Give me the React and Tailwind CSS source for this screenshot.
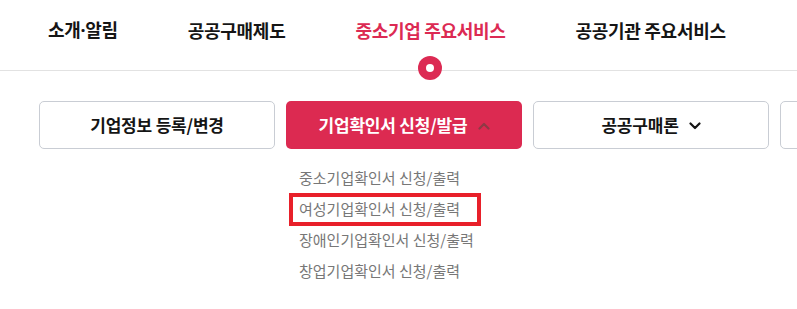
import React from 'react';

const navItems = ['소개·알림', '공공구매제도', '중소기업 주요서비스', '공공기관 주요서비스'];

const subItems = [
    '중소기업확인서 신청/출력',
    '여성기업확인서 신청/출력',
    '장애인기업확인서 신청/출력',
    '창업기업확인서 신청/출력',
];

const Chevron = ({ up, className }) => (
    <svg width="12" height="8" viewBox="0 0 12 8" className={className} fill="none">
        <path
            d={up ? 'M1.5 6.5L6 2l4.5 4.5' : 'M1.5 1.5L6 6l4.5-4.5'}
            stroke="currentColor"
            strokeWidth="2.2"
            strokeLinecap="round"
            strokeLinejoin="round"
        />
    </svg>
);

// the middle dot should be the narrow latin one, not the full-width CJK glyph
const NavLabel = ({ text }) => {
    if (!text.includes('·')) return text;
    const [a, b] = text.split('·');
    return (
        <>
            {a}
            <span style={{ fontFamily: '"Noto Sans", sans-serif' }}>·</span>
            {b}
        </>
    );
};

const App = () => {
    return (
        <div className="w-[797px] h-[309px] bg-white overflow-hidden" style={{ fontFamily: '"Noto Sans CJK KR", "Noto Sans", sans-serif' }}>
            {/* Top navigation */}
            <div className="h-[71px] border-b border-[#e2e2e2] flex items-start pl-[48px] gap-[70px]">
                {navItems.map((item, i) => (
                    <div key={item} className="relative h-[70px] flex items-center pb-[10px]">
                        <span className={`text-[18px] font-bold tracking-[-0.3px] whitespace-nowrap ${i === 2 ? 'text-[#dc2a53]' : 'text-[#151515]'}`}>
                            <NavLabel text={item} />
                        </span>
                        {i === 2 && (
                            <span className="absolute left-1/2 -translate-x-1/2 top-[56px] w-[24px] h-[24px] rounded-full bg-[#dc2a53] flex items-center justify-center">
                                <span className="w-[8px] h-[8px] rounded-full bg-white" />
                            </span>
                        )}
                    </div>
                ))}
            </div>

            {/* Sub menu buttons */}
            <div className="flex items-start gap-[11px] pl-[39px] pt-[30px]">
                <button className="w-[236px] h-[48px] shrink-0 rounded-[5px] border border-[#c9cdd4] bg-white flex items-center justify-center text-[17px] font-bold tracking-[-0.2px] text-[#151515]">
                    기업정보 등록/변경
                </button>

                <div className="w-[236px] shrink-0 flex flex-col">
                    <button className="h-[48px] rounded-[5px] bg-[#dc2a51] flex items-center justify-center gap-[10px] text-[17px] font-bold tracking-[-0.2px] text-white">
                        기업확인서 신청/발급
                        <Chevron up className="text-[#8e3a45] mt-[1px]" />
                    </button>
                    <ul className="pt-[14px]">
                        {subItems.map((s, i) => (
                            <li key={s} className="relative h-[31px] flex items-center pl-[13px] text-[15px] tracking-[0px] text-[#777777] whitespace-nowrap">
                                {s}
                                {i === 1 && (
                                    <span className="absolute left-[3px] top-[-1px] w-[192px] h-[33px] border-[4px] border-[#e8202a]" />
                                )}
                            </li>
                        ))}
                    </ul>
                </div>

                <button className="w-[236px] h-[48px] shrink-0 rounded-[5px] border border-[#c9cdd4] bg-white flex items-center justify-center gap-[10px] text-[17px] font-bold tracking-[-0.2px] text-[#151515]">
                    공공구매론
                    <Chevron className="text-[#151515] mt-[1px]" />
                </button>

                <button className="w-[236px] h-[48px] shrink-0 rounded-[5px] border border-[#c9cdd4] bg-white" />
            </div>
        </div>
    );
};

export default App;
